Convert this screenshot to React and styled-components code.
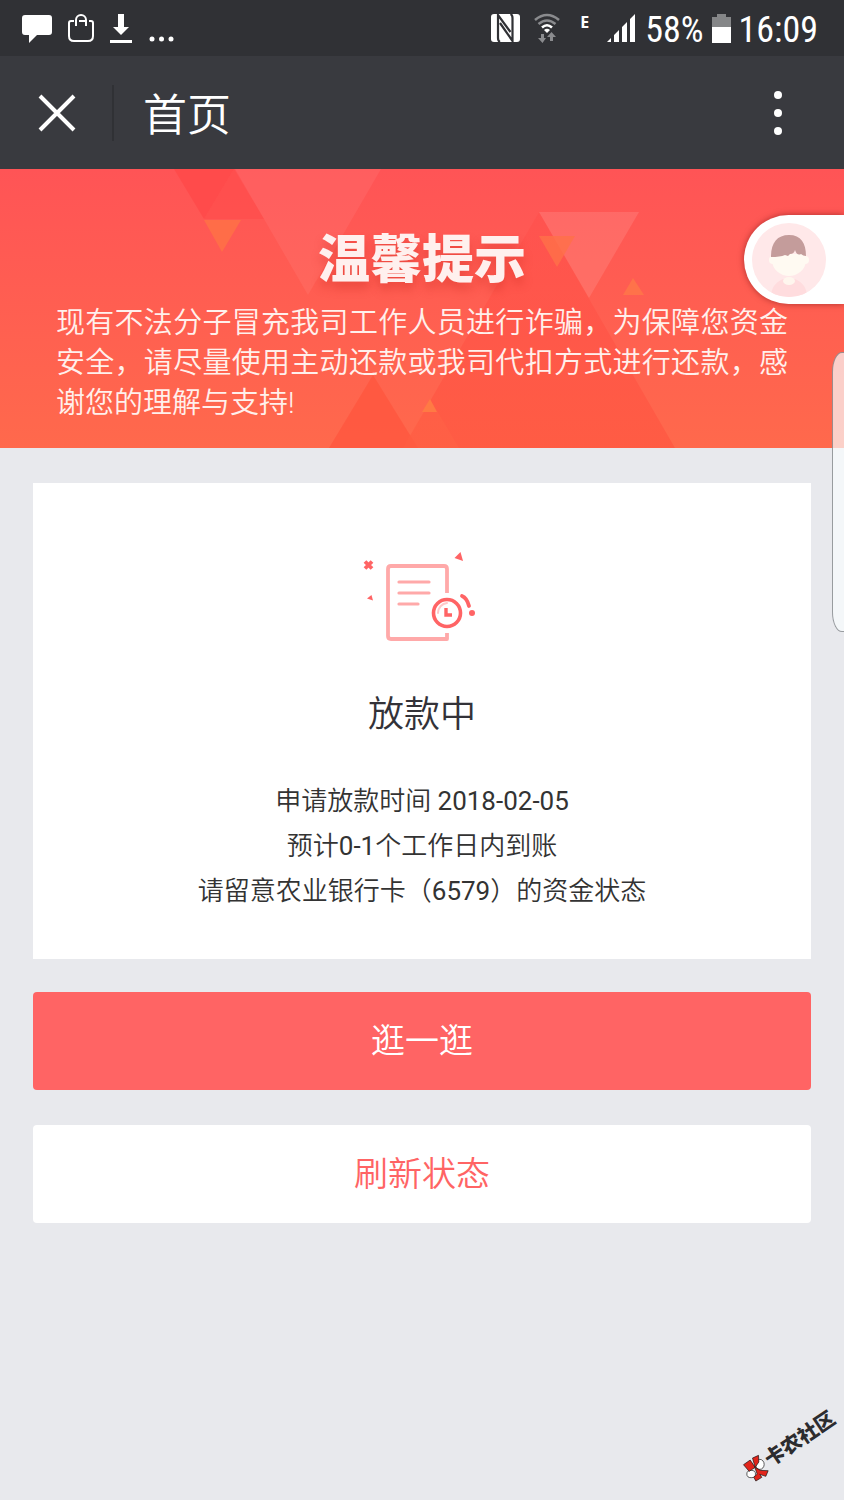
import React from "react";
import styled, { createGlobalStyle } from "styled-components";

const GlobalStyle = createGlobalStyle`
  * { box-sizing: border-box; }
  body {
    margin: 0;
    background: #e8e9ed;
    font-family: Roboto, "Noto Sans CJK SC", sans-serif;
    font-weight: 350;
  }
  h1, h2, p { margin: 0; font-weight: inherit; }
  svg { display: block; flex: none; }
`;

const Page = styled.div`
  position: relative;
  min-height: 100vh;
  display: flex;
  flex-direction: column;
  overflow: hidden;
  background: #e8e9ed;
`;

const StatusBar = styled.div`
  display: flex;
  align-items: center;
  justify-content: space-between;
  height: 56px;
  padding: 0 26px 0 22px;
  background: #303135;
  color: #fff;
`;

const StatusGroup = styled.div`
  display: flex;
  align-items: center;
  gap: ${(p) => p.$gap}px;
`;

const StatusText = styled.span`
  padding-top: 4px;
  font: 400 36px/52px "Roboto Condensed", "Liberation Sans Narrow", Roboto, sans-serif;
`;

const NetworkType = styled.span`
  padding: 0 4px 12px 6px;
  font: 700 16px/20px "Noto Sans", sans-serif;
`;

const TopBar = styled.header`
  display: flex;
  align-items: center;
  height: 113px;
  padding: 0 51px 0 28px;
  background: #393a3f;
  color: #fff;
`;

const IconButton = styled.button`
  display: flex;
  padding: 10px;
  border: 0;
  background: none;
  color: inherit;
  cursor: pointer;
`;

const Divider = styled.span`
  width: 2px;
  height: 56px;
  margin: 0 29px 0 26px;
  background: #303135;
`;

const PageTitle = styled.h1`
  flex: 1;
  padding-top: 6px;
  font-size: 44px;
  line-height: 60px;
`;

const Banner = styled.section`
  position: relative;
  padding: 62px 56px 25px;
  background: linear-gradient(#ff5456, #ff694c);
  color: #fff;
`;

const BannerArt = styled.svg`
  position: absolute;
  inset: 0;
  width: 100%;
  height: 100%;
`;

const BannerTitle = styled.h2`
  position: relative;
  text-align: center;
  font-size: 52px;
  line-height: 60px;
  font-weight: 900;
  color: #fff0ee;
  text-shadow: 0 7px 10px rgba(200, 40, 30, 0.35);
`;

const BannerText = styled.p`
  position: relative;
  margin-top: 12px;
  font-size: 29px;
  line-height: 40px;
  text-align: justify;
  color: #fff0ec;
`;

const Content = styled.main`
  flex: 1;
  display: flex;
  flex-direction: column;
  padding: 35px 33px;
`;

const Card = styled.section`
  display: flex;
  flex-direction: column;
  align-items: center;
  gap: 40px;
  margin-bottom: 33px;
  padding: 64px 24px 45px;
  background: #fff;
  text-align: center;
`;

const StatusTitle = styled.h2`
  padding-top: 4px;
  font-size: 36px;
  line-height: 48px;
  color: #333238;
`;

const Details = styled.div`
  font-size: 26px;
  line-height: 45px;
  color: #333;
`;

const Figures = styled.span`
  font-weight: 400;
`;

const ActionButton = styled.button`
  height: 98px;
  margin-bottom: 35px;
  padding: 0 0 6px;
  border: 0;
  border-radius: 4px;
  background: ${(p) => (p.$primary ? "#ff6464" : "#fff")};
  color: ${(p) => (p.$primary ? "#fff" : "#ff6464")};
  font: inherit;
  font-size: 34px;
  cursor: pointer;
`;

const ServiceTab = styled.button`
  position: absolute;
  top: 215px;
  right: 0;
  width: 100px;
  height: 89px;
  padding: 8px;
  border: 0;
  border-radius: 45px 0 0 45px;
  background: #fff;
  box-shadow: 0 0 6px rgba(120, 20, 20, 0.6);
  cursor: pointer;
`;

const EdgeHandle = styled.div`
  position: absolute;
  top: 352px;
  right: -2px;
  width: 14px;
  height: 280px;
  border: 1px solid rgba(90, 95, 100, 0.6);
  border-radius: 10px 0 0 10px / 20px 0 0 20px;
  background: rgba(250, 252, 253, 0.7);
`;

const Watermark = styled.div`
  position: absolute;
  right: 2px;
  bottom: 41px;
  display: flex;
  align-items: center;
  transform: rotate(-34deg);
  color: #2c2c2f;
  font-size: 20px;
  line-height: 26px;
  font-weight: 900;
`;

const ChatIcon = () => (
  <svg width="30" height="30" viewBox="0 0 30 30" fill="#fff">
    <path d="M3 2H27Q30 2 30 5V19Q30 22 27 22H15L7 30V22H3Q0 22 0 19V5Q0 2 3 2Z" />
  </svg>
);

const BagIcon = () => (
  <svg width="26" height="30" viewBox="0 0 26 30" fill="none" stroke="#fff" strokeWidth="2">
    <path d="M6 8H3Q1 8 1 10V23Q1 28 6 28H20Q25 28 25 23V10Q25 8 23 8H21" />
    <path d="M8 13V7A5 5 0 0 1 18 7V13M11 8H18" />
  </svg>
);

const DownloadIcon = () => (
  <svg width="22" height="30" viewBox="0 0 22 30" fill="#fff">
    <path d="M8 1H14V14H19L11 22L3 14H8ZM0 27H22V30H0Z" />
  </svg>
);

const MoreNoticesIcon = () => (
  <svg width="26" height="30" viewBox="0 0 26 30" fill="#fff">
    <circle cx="4" cy="26" r="2.5" />
    <circle cx="13.5" cy="26" r="2.5" />
    <circle cx="23" cy="26" r="2.5" />
  </svg>
);

const NfcIcon = () => (
  <svg width="29" height="30" viewBox="0 0 29 30">
    <path d="M3 1H26Q29 1 29 4V26Q29 29 26 29H3Q0 29 0 26V4Q0 1 3 1Z" fill="#fff" />
    <g fill="none" stroke="#303135" strokeWidth="2.2">
      <path d="M9 29Q7 28 7 25V2L19.500 19" />
      <path d="M9 10L21.500 28V5Q21.500 2 19.500 1" />
    </g>
  </svg>
);

const WifiIcon = () => (
  <svg width="26" height="30" viewBox="0 0 26 30" fill="none" strokeWidth="2.6">
    <path d="M1 7Q13 -3 25 7M4.500 11Q13 4 21.500 11" stroke="#8a8b8e" />
    <path d="M8 14.500Q13 10 18 14.500" stroke="#fff" />
    <path d="M10 17Q13 14.500 16 17L13 20Z" fill="#fff" />
    <path d="M7 21H10V25H12L8.500 30L4 25H7ZM16 28V24H13L17.500 19L22 24H19V28Z" fill="#8a8b8e" />
  </svg>
);

const SignalIcon = () => (
  <svg width="29" height="30" viewBox="0 0 29 30" fill="#fff">
    <path d="M0 29L4 25V29ZM7 29V22L12 17V29ZM15 29V14L20 9V29ZM23 29V6L28 1V29Z" />
  </svg>
);

const BatteryIcon = () => (
  <svg width="19" height="30" viewBox="0 0 19 30">
    <path d="M5 1H14V4H19V14H0V4H5Z" fill="#858688" />
    <path d="M0 14H19V30H0Z" fill="#fff" />
  </svg>
);

const CloseIcon = () => (
  <svg width="38" height="38" viewBox="0 0 38 38" stroke="#fff" strokeWidth="4">
    <path d="M2 2L36 36M36 2L2 36" />
  </svg>
);

const MenuIcon = () => (
  <svg width="10" height="46" viewBox="0 0 10 46" fill="#fff">
    <circle cx="5" cy="5" r="4" />
    <circle cx="5" cy="23" r="4" />
    <circle cx="5" cy="41" r="4" />
  </svg>
);

const BannerTriangles = () => (
  <BannerArt viewBox="0 0 844 279" preserveAspectRatio="xMidYMid slice" aria-hidden="true">
    <defs>
      <linearGradient id="rise" x1="0" y1="0" x2="0" y2="1">
        <stop offset="0" stopColor="#ff4845" stopOpacity="0.3" />
        <stop offset="1" stopColor="#ff5640" stopOpacity="0.7" />
      </linearGradient>
    </defs>
    <path d="M174 0H234L204 50Z" fill="#ff4a4a" fillOpacity="0.9" />
    <path d="M234 0L264 50H204Z" fill="#ff4d4b" fillOpacity="0.7" />
    <path d="M235 0H381L308 126Z" fill="#fff" fillOpacity="0.06" />
    <path d="M204 51H241L222 83Z" fill="#ff6d48" />
    <path d="M539 43L675 279H403Z" fill="url(#rise)" />
    <path d="M539 43H639L589 129Z" fill="#fff" fillOpacity="0.11" />
    <path d="M539 67H575L557 98Z" fill="#ff7148" fillOpacity="0.8" />
    <path d="M623 126H644L633 109Z" fill="#ff724a" />
    <path d="M373 206L418 279H329Z" fill="#ff563f" fillOpacity="0.8" />
    <path d="M430 230L459 279H403Z" fill="#ff6a4a" fillOpacity="0.3" />
    <path d="M422 243H437L430 230Z" fill="#ff7a44" />
  </BannerArt>
);

const Avatar = () => (
  <svg width="74" height="74" viewBox="0 0 74 74" aria-hidden="true">
    <defs>
      <clipPath id="face"><circle cx="37" cy="37" r="37" /></clipPath>
    </defs>
    <g clipPath="url(#face)">
      <rect width="74" height="74" fill="#ffe8e9" />
      <path d="M19 74Q19 61 31 56H43Q55 61 55 74Z" fill="#ffdcde" />
      <ellipse cx="37" cy="58" rx="6" ry="4" fill="#fff6ee" />
      <circle cx="21" cy="37" r="4" fill="#fffaf2" />
      <circle cx="53" cy="37" r="4" fill="#fffaf2" />
      <path d="M20 31H54V37C54 47 45 53 37 53S20 47 20 37Z" fill="#fffaf2" />
      <path d="M19 34C19 20 25 12 37 12S54 20 54 33Q51 33 49 31Q45 33 43 27Q42 31 38 31L36 33L33 32Q28 34 19 34Z" fill="#c49c9b" />
    </g>
  </svg>
);

const PendingIcon = () => (
  <svg width="120" height="100" viewBox="2 0 120 100" fill="none" strokeLinecap="round" strokeLinejoin="round" aria-hidden="true">
    <g stroke="#ffa9a9" strokeWidth="3.8">
      <path d="M87 46V22Q87 19 84 19H31Q28 19 28 22V89Q28 92 31 92H87V86" strokeLinecap="butt" />
      <path d="M39 35H69M39 46H69M39 57H58" strokeWidth="3.2" />
    </g>
    <circle cx="87" cy="66" r="13.500" stroke="#ff6465" strokeWidth="3.600" />
    <path d="M78 66A10 10 0 0 1 87 56" stroke="#ffc9c9" strokeWidth="2" />
    <path d="M86 61V68H92" stroke="#ff6465" strokeWidth="3.400" strokeLinecap="butt" strokeLinejoin="miter" />
    <path d="M102 49Q107 51 109 59" stroke="#ff6465" strokeWidth="3.800" />
    <circle cx="112" cy="66" r="3" fill="#ff6465" />
    <path d="M5 14.500L12 21.500M12 14.500L5 21.500" stroke="#ff6465" strokeWidth="3.800" strokeLinecap="butt" />
    <path d="M100.500 5L94.500 11L103 14Z" fill="#ff6465" />
    <path d="M11.500 48L7 51.500L13 53.500Z" fill="#ff6465" />
  </svg>
);

const CommunityLogo = () => (
  <svg width="26" height="26" viewBox="-39 -39 78 78" overflow="visible" aria-hidden="true">
    <g transform="rotate(34) translate(-38 -39)" stroke="#111" strokeWidth="2">
      <ellipse cx="50" cy="27" rx="13" ry="15" fill="#fff" />
      <ellipse cx="24" cy="56" rx="13" ry="11" fill="#fff" />
      <path d="M1 28L21 14L36 36L18 48Z" fill="#e1251b" />
      <path d="M28 8L46 0L47 20L36 36Z" fill="#e1251b" />
      <path d="M35 36L52 45L75 46L68 63L50 57L56 66L38 77L32 66L42 56Z" fill="#e1251b" />
    </g>
  </svg>
);

export default function App() {
  return (
    <>
      <GlobalStyle />
      <Page>
        <StatusBar>
          <StatusGroup $gap={16}>
            <ChatIcon />
            <BagIcon />
            <DownloadIcon />
            <MoreNoticesIcon />
          </StatusGroup>
          <StatusGroup $gap={9}>
            <StatusGroup $gap={14}>
              <NfcIcon />
              <WifiIcon />
              <NetworkType>E</NetworkType>
              <SignalIcon />
            </StatusGroup>
            <StatusGroup $gap={8}>
              <StatusText>58%</StatusText>
              <BatteryIcon />
              <StatusText>16:09</StatusText>
            </StatusGroup>
          </StatusGroup>
        </StatusBar>

        <TopBar>
          <IconButton aria-label="关闭"><CloseIcon /></IconButton>
          <Divider />
          <PageTitle>首页</PageTitle>
          <IconButton aria-label="更多"><MenuIcon /></IconButton>
        </TopBar>

        <Banner>
          <BannerTriangles />
          <BannerTitle>温馨提示</BannerTitle>
          <BannerText>
            现有不法分子冒充我司工作人员进行诈骗，为保障您资金安全，请尽量使用主动还款或我司代扣方式进行还款，感谢您的理解与支持!
          </BannerText>
        </Banner>

        <Content>
          <Card>
            <PendingIcon />
            <StatusTitle>放款中</StatusTitle>
            <Details>
              <p>申请放款时间 <Figures>2018-02-05</Figures></p>
              <p>预计<Figures>0-1</Figures>个工作日内到账</p>
              <p>请留意农业银行卡（<Figures>6579</Figures>）的资金状态</p>
            </Details>
          </Card>
          <ActionButton $primary>逛一逛</ActionButton>
          <ActionButton>刷新状态</ActionButton>
        </Content>

        <ServiceTab aria-label="客服"><Avatar /></ServiceTab>
        <EdgeHandle />
        <Watermark>
          <CommunityLogo />
          <span>卡农社区</span>
        </Watermark>
      </Page>
    </>
  );
}
